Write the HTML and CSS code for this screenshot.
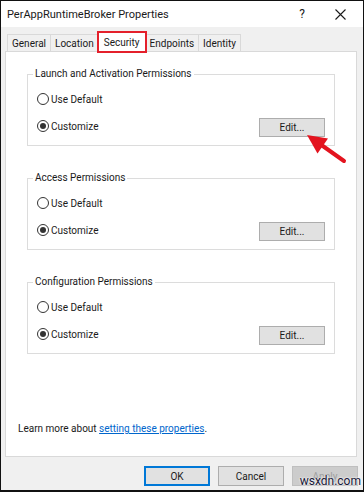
FILE: index.html
```html
<!DOCTYPE html>
<html lang="en">
<head>
    <meta charset="UTF-8">
    <meta name="viewport" content="width=device-width, initial-scale=1.0">
    <title>PerAppRuntimeBroker Properties</title>
    <link rel="stylesheet" href="styles.css">
</head>
<body>
    <div class="window">
        <div class="titlebar">
            <span class="title">PerAppRuntimeBroker Properties</span>
            <span class="help">?</span>
            <span class="close">
                <svg width="11" height="11" viewBox="0 0 11 11">
                    <path d="M0.5 0.5 L10.5 10.5 M10.5 0.5 L0.5 10.5" stroke="#1a1a1a" stroke-width="1.1" fill="none"/>
                </svg>
            </span>
        </div>

        <div class="tabs">
            <div class="tab">General</div>
            <div class="tab">Location</div>
            <div class="tab active">Security</div>
            <div class="tab">Endpoints</div>
            <div class="tab">Identity</div>
        </div>

        <div class="panel">
            <fieldset class="group">
                <legend>Launch and Activation Permissions</legend>
                <div class="option"><span class="radio"></span>Use Default</div>
                <div class="option-row">
                    <div class="option"><span class="radio checked"></span>Customize</div>
                    <button class="btn edit">Edit...</button>
                </div>
            </fieldset>

            <fieldset class="group">
                <legend>Access Permissions</legend>
                <div class="option"><span class="radio"></span>Use Default</div>
                <div class="option-row">
                    <div class="option"><span class="radio checked"></span>Customize</div>
                    <button class="btn edit">Edit...</button>
                </div>
            </fieldset>

            <fieldset class="group">
                <legend>Configuration Permissions</legend>
                <div class="option"><span class="radio"></span>Use Default</div>
                <div class="option-row">
                    <div class="option"><span class="radio checked"></span>Customize</div>
                    <button class="btn edit">Edit...</button>
                </div>
            </fieldset>

            <p class="learn">Learn more about <a href="#">setting these properties</a>.</p>
        </div>

        <div class="footer">
            <button class="btn default">OK</button>
            <button class="btn">Cancel</button>
            <button class="btn" disabled>Apply</button>
        </div>

        <!-- annotation arrow pointing at the first Edit button -->
        <svg class="arrow" width="48" height="38" viewBox="0 0 48 38">
            <line x1="19" y1="15" x2="43" y2="32" stroke="#e3141f" stroke-width="4" stroke-linecap="round"/>
            <polygon points="6,6 27,9.5 16.5,24.5" fill="#e3141f"/>
        </svg>
        <span class="watermark">wsxdn.com</span>
    </div>
</body>
</html>
```

FILE: styles.css
```css
body {
    margin: 0;
    font-family: Roboto, "Liberation Sans", Arial, sans-serif;
    font-size: 10px;
    color: #1a1a1a;
}
.window {
    position: relative;
    width: 364px;
    height: 492px;
    box-sizing: border-box;
    border: 1px solid #111;
    border-bottom-width: 2px;
    background-color: #f0f0f0;
    display: flex;
    flex-direction: column;
    overflow: hidden;
}
.titlebar {
    height: 26px;
    background-color: #fff;
    display: flex;
    align-items: center;
    padding-left: 6px;
}
.title {
    font-size: 11px;
    flex: 1;
}
.help {
    font-size: 12px;
    width: 14px;
    text-align: center;
    margin-right: 26px;
}
.close {
    display: flex;
    margin-right: 17px;
}
.tabs {
    display: flex;
    align-items: flex-end;
    padding-left: 6px;
    margin-top: 4px;
    height: 20px;
}
.tab {
    height: 17px;
    line-height: 17px;
    padding: 0 4px;
    border: 1px solid #d9d9d9;
    border-bottom: none;
    border-right: none;
    background-color: #f0f0f0;
    box-sizing: border-box;
}
.tab:last-child {
    border-right: 1px solid #d9d9d9;
}
.tab.active {
    height: 20px;
    line-height: 19px;
    padding: 0 5px;
    background-color: #fff;
    border-right: 1px solid #d9d9d9;
    outline: 2px solid #e4202b;
    outline-offset: -1px;
    position: relative;
    z-index: 1;
    margin-bottom: -1px;
}
.tab.active + .tab {
    border-left: none;
}
.panel {
    height: 406px;
    box-sizing: border-box;
    margin: 0 6px 0 4px;
    background-color: #fff;
    border: 1px solid #d9d9d9;
    display: flex;
    flex-direction: column;
    padding-top: 15px;
}
.group {
    margin: 0 21px 25px;
    padding: 8px 9px 8px 9px;
    border: 1px solid #dcdcdc;
    min-width: 0;
}
.group legend {
    padding: 0 2px;
    margin-left: -4px;
    line-height: 14px;
}
.option {
    display: flex;
    align-items: center;
    height: 20px;
}
.option-row {
    display: flex;
    justify-content: space-between;
    align-items: center;
    margin-top: 6px;
}
.radio {
    width: 12px;
    height: 12px;
    box-sizing: border-box;
    border: 1px solid #333;
    border-radius: 50%;
    margin-right: 2px;
    display: flex;
    align-items: center;
    justify-content: center;
}
.radio.checked::after {
    content: '';
    width: 6px;
    height: 6px;
    border-radius: 50%;
    background-color: #333;
}
.btn {
    width: 66px;
    height: 20px;
    padding: 0;
    font-family: inherit;
    font-size: 10px;
    color: #1a1a1a;
    background-color: #e1e1e1;
    border: 1px solid #adadad;
}
.btn.edit {
    height: 19px;
    margin-top: 3px;
}
.btn.default {
    border-color: #0078d7;
    border-width: 2px;
}
.btn:disabled {
    background-color: #cccccc;
    border-color: #bfbfbf;
    color: #a0a0a0;
}
.learn {
    margin: auto 0 22px 12px;
}
.learn a {
    color: #0066cc;
}
.footer {
    display: flex;
    justify-content: flex-end;
    gap: 8px;
    padding: 9px 5px 0 0;
}
.arrow {
    position: absolute;
    left: 300px;
    top: 128px;
}
.watermark {
    position: absolute;
    right: 2px;
    bottom: 2px;
    font-size: 12px;
    color: #161636;
    text-shadow: 0 0 2px #fff, 0 0 2px #fff;
}
```
